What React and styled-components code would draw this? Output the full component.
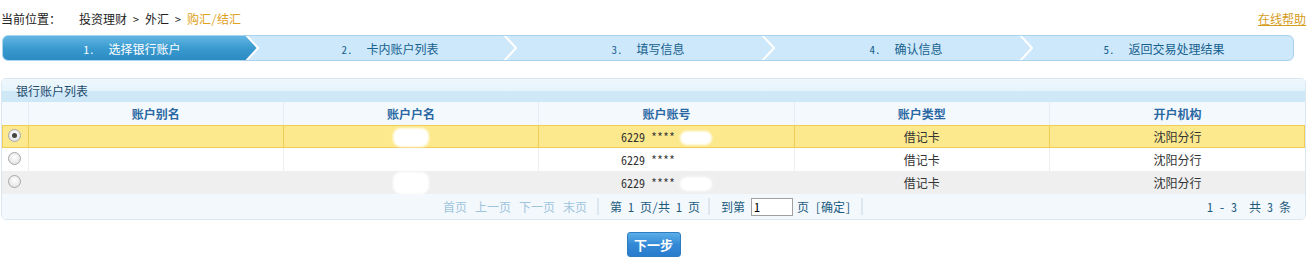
import React from "react";
import styled, { createGlobalStyle, css } from "styled-components";

const Global = createGlobalStyle`
  html, body { margin: 0; padding: 0; background: #fff; }
  body { font-family: "Noto Sans Mono CJK SC", "Noto Sans CJK SC", "Liberation Sans", sans-serif; font-size: 12px; color: #333; }
  * { box-sizing: border-box; }
`;

const Page = styled.div`
  width: 1307px;
  padding: 0 1px;
`;

const TopRow = styled.div`
  height: 35px;
  padding-top: 1px;
  display: flex;
  align-items: center;
  justify-content: space-between;
`;

const Crumbs = styled.div`
  display: flex;
  align-items: center;
  white-space: pre;
  color: #222;
`;

const CrumbLabel = styled.span`
  width: 78px;
`;

const Current = styled.span`
  color: #e0a11c;
`;

const HelpLink = styled.a`
  color: #d59d1c;
  text-decoration: underline;
  cursor: pointer;
`;

const StepBar = styled.div`
  margin-left: 1px;
  width: 1292px;
  height: 26px;
  display: flex;
  border: 1px solid #a9d3ef;
  border-radius: 6px;
  overflow: hidden;
  background: #cde8fa;
`;

const Step = styled.div`
  flex: 1;
  position: relative;
  display: flex;
  align-items: center;
  justify-content: center;
  color: #17618e;
  white-space: nowrap;
  ${(p) =>
    p.$active &&
    css`
      color: #fff;
      &::before {
        content: "";
        position: absolute;
        inset: 0;
        background: linear-gradient(#63b6e2, #3a9bd0 50%, #2b8bc3);
        clip-path: polygon(0 0, calc(100% - 14px) 0, calc(100% - 3px) 50%, calc(100% - 14px) 100%, 0 100%);
      }
    `}
`;

const StepText = styled.span`
  position: relative;
`;

const StepNum = styled.span`
  margin-right: 14px;
  font-size: 11px;
`;

const Chevron = styled.svg`
  position: absolute;
  right: 2px;
  top: 0;
  width: 14px;
  height: 24px;
`;

const Panel = styled.div`
  margin-top: 17px;
  border: 1px solid #dbe7f0;
  border-radius: 5px;
  overflow: hidden;
`;

const PanelTitle = styled.div`
  height: 23px;
  padding-left: 14px;
  display: flex;
  align-items: center;
  color: #1e4b6c;
  background: linear-gradient(#eef8fd, #e6f4fc 52%, #cfe8f8 52%, #cfe8f8);
`;

const Table = styled.table`
  width: 100%;
  border-collapse: collapse;
  table-layout: fixed;
`;

const HeadCell = styled.th`
  height: 23px;
  padding: 0;
  background: #f4f9fd;
  color: #2a68a3;
  font-weight: bold;
  text-align: center;
  border-left: 1px solid #e4edf4;
  &:first-child { border-left: none; }
`;

const rowBg = {
  selected: "#fce98d",
  plain: "#ffffff",
  alt: "#efefef",
};
const rowLine = {
  selected: "#f0cd55",
  plain: "#eeeeee",
  alt: "#efefef",
};

const Row = styled.tr`
  background: ${(p) => rowBg[p.$kind]};
  ${(p) =>
    p.$kind === "selected" &&
    css`
      outline: 1px solid ${rowLine.selected};
      outline-offset: -1px;
    `}
`;

const Cell = styled.td`
  height: 23px;
  padding: 0;
  text-align: center;
  color: #333;
  border-left: 1px solid ${(p) => rowLine[p.$kind]};
  &:first-child { border-left: none; text-align: left; padding-left: 6px; }
`;

const Radio = styled.span`
  display: inline-block;
  vertical-align: middle;
  width: 13px;
  height: 13px;
  border-radius: 50%;
  border: 1px solid #a8a8a8;
  background: radial-gradient(circle at 50% 40%, #ffffff, #dcdcdc);
  position: relative;
  top: -3px;
  ${(p) =>
    p.$checked &&
    css`
      &::after {
        content: "";
        position: absolute;
        left: 3px;
        top: 3px;
        width: 5px;
        height: 5px;
        border-radius: 50%;
        background: #444;
      }
    `}
`;

const Redacted = styled.span`
  display: inline-block;
  vertical-align: middle;
  width: ${(p) => p.$w}px;
  height: ${(p) => p.$h}px;
  margin-left: ${(p) => p.$ml || 0}px;
  background: #fff;
  border-radius: 8px;
  filter: blur(1px);
`;

const Pager = styled.div`
  height: 25px;
  display: grid;
  grid-template-columns: 1fr auto 1fr;
  align-items: center;
  background: #f3f8fd;
`;

const PagerMain = styled.div`
  display: flex;
  align-items: center;
  grid-column: 2;
  margin-right: 12px;
`;

const PagerGroup = styled.div`
  display: flex;
  align-items: center;
  gap: ${(p) => p.$gap ?? 8}px;
  padding: 0 ${(p) => p.$pr ?? 10}px 0 11px;
  border-right: 2px solid #dfe7ee;
  height: 17px;
  white-space: pre;
  color: #1d5b7d;
`;

const PageLink = styled.span`
  color: #a0c4dc;
`;

const PageInput = styled.input`
  width: 42px;
  height: 18px;
  border: 1px solid #a0a0a0;
  padding: 0 2px;
  font: inherit;
  font-size: 12px;
  color: #000;
  margin: 0 -1px 0 1px;
`;

const PagerTotal = styled.div`
  justify-self: end;
  padding-right: 14px;
  color: #1d5b7d;
  white-space: pre;
`;

const Actions = styled.div`
  display: flex;
  justify-content: center;
  padding-top: 12px;
`;

const NextButton = styled.button`
  width: 54px;
  height: 25px;
  border: 1px solid #2f7cc0;
  border-radius: 3px;
  background: linear-gradient(#5aaee8, #3489d6 50%, #2a7ccc);
  color: #fff;
  font-family: inherit;
  font-size: 13px;
  font-weight: bold;
  padding: 0;
  cursor: pointer;
`;

const steps = ["选择银行账户", "卡内账户列表", "填写信息", "确认信息", "返回交易处理结果"];
const cols = ["账户别名", "账户户名", "账户账号", "账户类型", "开户机构"];
const rows = [
  { kind: "selected", checked: true, blobH: 19 },
  { kind: "plain", checked: false, blobH: 16 },
  { kind: "alt", checked: false, blobH: 22 },
];

export default function App() {
  return (
    <Page>
      <Global />
      <TopRow>
        <Crumbs>
          <CrumbLabel>当前位置：</CrumbLabel>
          <span>投资理财 &gt; 外汇 &gt; </span>
          <Current>购汇/结汇</Current>
        </Crumbs>
        <HelpLink>在线帮助</HelpLink>
      </TopRow>

      <StepBar>
        {steps.map((s, i) => (
          <Step key={s} $active={i === 0}>
            <StepText>
              <StepNum>{i + 1}.</StepNum>
              {s}
            </StepText>
            {i < steps.length - 1 && (
              <Chevron viewBox="0 0 14 24" preserveAspectRatio="none">
                <polyline points="1,-1 13,12 1,25" fill="none" stroke="#fff" strokeWidth="2" />
              </Chevron>
            )}
          </Step>
        ))}
      </StepBar>

      <Panel>
        <PanelTitle>银行账户列表</PanelTitle>
        <Table>
          <colgroup>
            <col style={{ width: 26 }} />
            <col />
            <col />
            <col />
            <col />
            <col />
          </colgroup>
          <thead>
            <tr>
              <HeadCell />
              {cols.map((c) => (
                <HeadCell key={c}>{c}</HeadCell>
              ))}
            </tr>
          </thead>
          <tbody>
            {rows.map((r, i) => (
              <Row key={i} $kind={r.kind}>
                <Cell $kind={r.kind}>
                  <Radio $checked={r.checked} />
                </Cell>
                <Cell $kind={r.kind} />
                <Cell $kind={r.kind}>
                  <Redacted $w={36} $h={r.blobH} />
                </Cell>
                <Cell $kind={r.kind}>
                  <span>6229 ****</span>
                  <Redacted $w={32} $h={14} $ml={5} />
                </Cell>
                <Cell $kind={r.kind}>借记卡</Cell>
                <Cell $kind={r.kind}>沈阳分行</Cell>
              </Row>
            ))}
          </tbody>
        </Table>
        <Pager>
          <PagerMain>
            <PagerGroup>
              <PageLink>首页</PageLink>
              <PageLink>上一页</PageLink>
              <PageLink>下一页</PageLink>
              <PageLink>末页</PageLink>
            </PagerGroup>
            <PagerGroup $pr={8}>第 1 页/共 1 页</PagerGroup>
            <PagerGroup $gap={5}>
              <span>到第</span>
              <PageInput defaultValue="1" />
              <span>页 [确定]</span>
            </PagerGroup>
          </PagerMain>
          <PagerTotal>1 - 3  共 3 条</PagerTotal>
        </Pager>
      </Panel>

      <Actions>
        <NextButton>下一步</NextButton>
      </Actions>
    </Page>
  );
}
